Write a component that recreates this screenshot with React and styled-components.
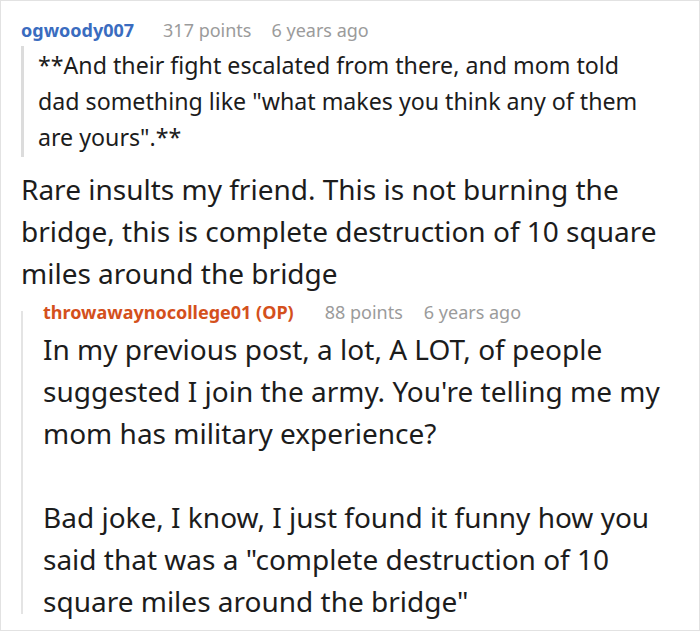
import React from "react";
import styled, { createGlobalStyle } from "styled-components";

const Global = createGlobalStyle`
  html, body { margin: 0; padding: 0; background: #ffffff; }
  body { font-family: "Noto Sans", "Open Sans", sans-serif; }
`;

const Frame = styled.div`
  box-sizing: border-box;
  width: 700px;
  height: 631px;
  border: 1px solid #e2e2e2;
  padding: 17px 34px 0 20px;
  overflow: hidden;
  display: flex;
  flex-direction: column;
  color: #1c1c1c;
`;

const Meta = styled.div`
  display: flex;
  align-items: baseline;
  font-size: 18px;
  line-height: 24px;
  white-space: nowrap;
  margin-top: ${(p) => p.$offset || 0}px;
`;

const Author = styled.span`
  font-weight: 700;
  color: ${(p) => (p.$op ? "#d4501c" : "#3a6cbf")};
  margin-right: ${(p) => (p.$op ? 31 : 29)}px;
`;

const Info = styled.span`
  color: #9b9b9b;
  margin-right: ${(p) => p.$gap || 0}px;
`;

const Quote = styled.blockquote`
  margin: 4px 0 0 0;
  padding: 1px 10px 2px 14px;
  border-left: 3px solid #dcdcdc;
  font-size: 23.2px;
  line-height: 36px;
`;

const Text = styled.p`
  margin: 0;
  font-size: 28px;
  line-height: 42px;
`;

const Body = styled.div`
  display: flex;
  flex-direction: column;
  gap: 42px;
  margin-top: ${(p) => p.$top || 0}px;
  margin-bottom: ${(p) => p.$bottom || 0}px;
`;

const Reply = styled.div`
  display: flex;
  flex-direction: column;
  margin-top: 17px;
  padding-left: 20px;
  border-left: 2px solid #e4e4e4;
`;

export default function App() {
  return (
    <>
      <Global />
      <Frame>
        <Meta>
          <Author>ogwoody007</Author>
          <Info $gap={20}>317 points</Info>
          <Info>6 years ago</Info>
        </Meta>
        <Quote>
          **And their fight escalated from there, and mom told dad something
          like "what makes you think any of them are yours".**
        </Quote>
        <Body $top={11}>
          <Text>
            Rare insults my friend. This is not burning the bridge, this is
            complete destruction of 10 square miles around the bridge
          </Text>
        </Body>
        <Reply>
          <Meta $offset={-11}>
            <Author $op>throwawaynocollege01 (OP)</Author>
            <Info $gap={21}>88 points</Info>
            <Info>6 years ago</Info>
          </Meta>
          <Body $top={4} $bottom={-8}>
            <Text>
              In my previous post, a lot, A LOT, of people suggested I join the
              army. You're telling me my mom has military experience?
            </Text>
            <Text>
              Bad joke, I know, I just found it funny how you said that was a
              "complete destruction of 10 square miles around the bridge"
            </Text>
          </Body>
        </Reply>
      </Frame>
    </>
  );
}
